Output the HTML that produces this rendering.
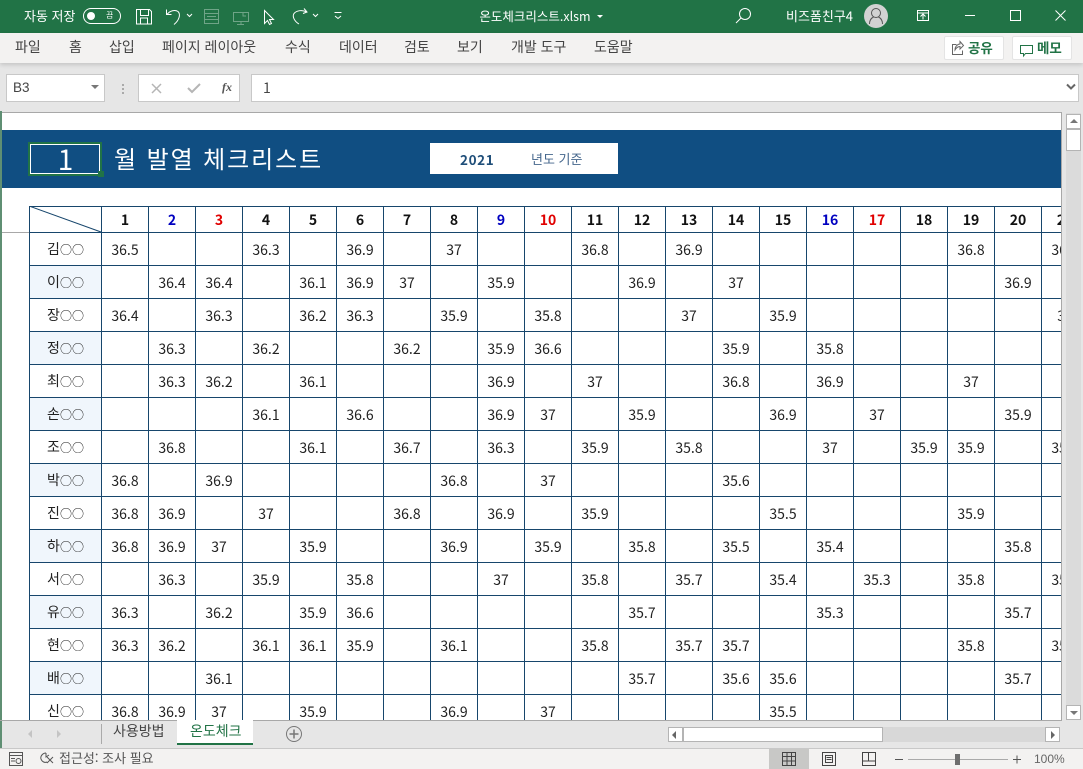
<!DOCTYPE html>
<html lang="ko"><head><meta charset="utf-8"><title>온도체크리스트</title>
<style>
*{box-sizing:border-box}
html,body{margin:0;padding:0}
body{width:1083px;height:769px;position:relative;overflow:hidden;background:#e6e6e6;font-family:"Liberation Sans","Noto Sans CJK KR",sans-serif;color:#333}
.a{position:absolute;white-space:nowrap}
.k{font-family:"Noto Sans CJK KR",sans-serif}
#tb{left:0;top:0;width:1083px;height:33px;background:#217346}
#rb{left:0;top:33px;width:1083px;height:30px;background:#f3f2f1;box-shadow:0 2px 4px rgba(0,0,0,.14)}
.w{color:#fff;font-size:13px;line-height:16px}
.m{font-size:14px;line-height:16px;top:39px;color:#444}
.box{background:#fff;border:1px solid #c8c8c8}
#sheet{left:2px;top:112px;width:1060px;height:609px;background:#fff;border-top:1px solid #a8a8a8;border-right:1px solid #a8a8a8;overflow:hidden}
#sheet table{position:absolute;left:27px;top:93px;border-collapse:collapse;table-layout:fixed;width:1059px;font-family:"Noto Sans CJK KR",sans-serif;font-size:14px;color:#222}
#sheet tr{height:33px}
#sheet tr.h{height:26px}
#sheet td,#sheet th{border:1px solid #17466c;padding:1px 0 0;text-align:center;font-weight:400;line-height:20px;overflow:hidden;white-space:nowrap}
#sheet th i{font-style:normal;font-size:12px}
#sheet tr.h td{font-weight:700;color:#111}
#sheet td.b{color:#0000c0!important}
#sheet td.r{color:#e00000!important}
#sheet th.f{background:#f0f6fc}
.sb{background:#fff;border:1px solid #b4b4b4}
</style></head><body>
<div class="a" id="tb"></div>
<div class="a w k" style="left:24px;top:8px">자동 저장</div>
<div class="a" style="left:83px;top:8px;width:38px;height:16px;border:1px solid #fff;border-radius:8px"></div>
<div class="a" style="left:87px;top:12px;width:8px;height:8px;background:#fff;border-radius:50%"></div>
<div class="a k" style="left:106px;top:10px;color:#fff;font-size:8px;line-height:12px">끔</div>
<svg class="a" style="left:0;top:0" width="1083" height="33" fill="none" stroke="#fff" stroke-width="1">
<path d="M136.500 9.500h13l2 2v12.500h-15zM140.500 9.500v6h8v-6M140.500 24v-6h7v6"/>
<path d="M166.500 9.500v5h5M167 14.500c3-4 8-5 11-3 3 3 1 9-4 13"/>
<path d="M187 14l2.500 2.500L192 14"/>
<g opacity=".35"><path d="M204.500 9.500h14v14h-14zM204.500 13.500h14M204.500 19.500h14M207 16.500h9"/>
<path d="M233.500 12.500h15v9h-15zM241 21.500v3M237 24.500h7M243 12v4h3"/></g>
<path d="M264.500 10.500v13l3-3 2 4 2-1-2-4h4z"/>
<path d="M304 8.500l3 3.500-4 1.500M306.500 12c-4-2.500-10-1.500-12.500 1.500-2 3 .5 8 5 10.500"/>
<path d="M313 14l2.500 2.500L318 14"/>
<path d="M334.500 12.500h7M335 16l3 2.500 3-2.500"/>
<circle cx="745" cy="14" r="5.500"/><path d="M741 18l-5 5"/>
<path d="M917.500 10.500h11v10h-11zM917.500 13h11M923 19.500v-5M920.500 16.500l2.500-2.500 2.500 2.500"/>
<path d="M965 15.500h10M1010.500 10.500h10v10h-10zM1055.500 10.500l10 10M1065.500 10.500l-10 10"/>
</svg>
<div class="a w k" style="left:460px;top:8px;width:150px;text-align:center;font-size:12.500px">온도체크리스트.xlsm</div>
<div class="a" style="left:597px;top:15px;border-left:3px solid transparent;border-right:3px solid transparent;border-top:3px solid #fff"></div>
<div class="a w k" style="left:786px;top:8px">비즈폼친구4</div>
<div class="a" style="left:864px;top:4px;width:24px;height:24px;background:#d2d2d2;border-radius:50%"></div>
<svg class="a" style="left:864px;top:4px" width="24" height="24" fill="none" stroke="#555"><circle cx="12" cy="9" r="4.500"/><path d="M5.500 20c0-5 3-6.500 4-7M18.500 20c0-5-3-6.500-4-7"/></svg>
<div class="a" id="rb"></div>
<div class="a m k" style="left:15px">파일</div>
<div class="a m k" style="left:69px">홈</div>
<div class="a m k" style="left:109px">삽입</div>
<div class="a m k" style="left:162px">페이지 레이아웃</div>
<div class="a m k" style="left:285px">수식</div>
<div class="a m k" style="left:339px">데이터</div>
<div class="a m k" style="left:404px">검토</div>
<div class="a m k" style="left:457px">보기</div>
<div class="a m k" style="left:511px">개발 도구</div>
<div class="a m k" style="left:594px">도움말</div>
<div class="a" style="left:944px;top:36px;width:60px;height:24px;background:#fff;border:1px solid #e4e4e4;border-radius:2px"></div>
<div class="a" style="left:1012px;top:36px;width:60px;height:24px;background:#fff;border:1px solid #e4e4e4;border-radius:2px"></div>
<div class="a k" style="left:968px;top:39px;font-size:13.500px;line-height:16px;font-weight:700;color:#217346">공유</div>
<div class="a k" style="left:1037px;top:39px;font-size:13.500px;line-height:16px;font-weight:700;color:#217346">메모</div>
<svg class="a" style="left:0;top:33px" width="1083" height="30" fill="none" stroke="#217346"><path d="M956.500 11.500h-4v10h10v-4M955 17c0-4 3-6 5-6V8.500l3.500 4-3.500 3.500v-2.500c-2 0-3.500 1-5 3.500z" stroke="#666"/><path d="M1020.500 12.500h12v8h-7l-2 2.500v-2.500h-3z"/></svg>
<div class="a box" style="left:6px;top:74px;width:99px;height:28px"></div>
<div class="a" style="left:13px;top:80px;font-size:13.500px;line-height:16px;color:#444">B3</div>
<div class="a" style="left:91px;top:85px;border-left:4px solid transparent;border-right:4px solid transparent;border-top:4px solid #777"></div>
<svg class="a" style="left:120px;top:83px" width="5" height="13" fill="#aaa"><rect x="2" y="1" width="2" height="2"/><rect x="2" y="5" width="2" height="2"/><rect x="2" y="9" width="2" height="2"/></svg>
<div class="a box" style="left:138px;top:74px;width:102px;height:28px"></div>
<svg class="a" style="left:138px;top:74px" width="102" height="28" fill="none" stroke="#b5b5b5" stroke-width="1.500"><path d="M14 10l9 9M23 10l-9 9"/><path d="M50 14l4 4 8-8" stroke-width="2"/></svg>
<div class="a" style="left:222px;top:80px;font-family:'Liberation Serif',serif;font-style:italic;font-weight:700;font-size:12px;line-height:15px;color:#555">fx</div>
<div class="a box" style="left:251px;top:74px;width:828px;height:28px"></div>
<div class="a k" style="left:263px;top:79px;font-size:14px;line-height:18px;color:#444">1</div>
<svg class="a" style="left:1065px;top:83px" width="12" height="8" fill="none" stroke="#666" stroke-width="2"><path d="M2 1.500l4 4 4-4"/></svg>
<div class="a" style="left:0;top:111px;width:2px;height:637px;background:#5f8f73"></div>

<div class="a" id="sheet">
<div class="a" style="left:0;top:17px;width:1060px;height:58px;background:#104e82"></div>
<div class="a" style="left:0;top:119px;width:27px;height:1px;background:#a8a8a8"></div>
<div class="a" style="left:26px;top:29px;width:74px;height:34px;border:2px solid #217346;box-shadow:inset 0 0 0 1px #fff"></div>
<div class="a" style="left:96px;top:58px;width:6px;height:6px;background:#217346"></div>
<div class="a k" style="left:27px;top:29px;width:73px;text-align:center;color:#fff;font-size:28px;line-height:34px">1</div>
<div class="a k" style="left:112px;top:28px;color:#fff;font-size:24px;line-height:34px;letter-spacing:1.900px">월 발열 체크리스트</div>
<div class="a" style="left:428px;top:30px;width:188px;height:31px;background:#fff"></div>
<div class="a k" style="left:458px;top:36px;color:#1f4e79;font-weight:700;font-size:13.500px;line-height:20px;letter-spacing:.6px">2021</div>
<div class="a k" style="left:529px;top:36px;color:#44668c;font-size:13px;line-height:20px">년도 기준</div>
<table><colgroup><col style="width:72px"><col style="width:47px"><col style="width:47px"><col style="width:47px"><col style="width:47px"><col style="width:47px"><col style="width:47px"><col style="width:47px"><col style="width:47px"><col style="width:47px"><col style="width:47px"><col style="width:47px"><col style="width:47px"><col style="width:47px"><col style="width:47px"><col style="width:47px"><col style="width:47px"><col style="width:47px"><col style="width:47px"><col style="width:47px"><col style="width:47px"><col style="width:47px"></colgroup>
<tr class="h"><td></td><td>1</td><td class="b">2</td><td class="r">3</td><td>4</td><td>5</td><td>6</td><td>7</td><td>8</td><td class="b">9</td><td class="r">10</td><td>11</td><td>12</td><td>13</td><td>14</td><td>15</td><td class="b">16</td><td class="r">17</td><td>18</td><td>19</td><td>20</td><td>21</td></tr>
<tr><th>김<i>○○</i></th><td>36.5</td><td></td><td></td><td>36.3</td><td></td><td>36.9</td><td></td><td>37</td><td></td><td></td><td>36.8</td><td></td><td>36.9</td><td></td><td></td><td></td><td></td><td></td><td>36.8</td><td></td><td>36.9</td></tr>
<tr><th class="f">이<i>○○</i></th><td></td><td>36.4</td><td>36.4</td><td></td><td>36.1</td><td>36.9</td><td>37</td><td></td><td>35.9</td><td></td><td></td><td>36.9</td><td></td><td>37</td><td></td><td></td><td></td><td></td><td></td><td>36.9</td><td></td></tr>
<tr><th>장<i>○○</i></th><td>36.4</td><td></td><td>36.3</td><td></td><td>36.2</td><td>36.3</td><td></td><td>35.9</td><td></td><td>35.8</td><td></td><td></td><td>37</td><td></td><td>35.9</td><td></td><td></td><td></td><td></td><td></td><td>37</td></tr>
<tr><th class="f">정<i>○○</i></th><td></td><td>36.3</td><td></td><td>36.2</td><td></td><td></td><td>36.2</td><td></td><td>35.9</td><td>36.6</td><td></td><td></td><td></td><td>35.9</td><td></td><td>35.8</td><td></td><td></td><td></td><td></td><td></td></tr>
<tr><th>최<i>○○</i></th><td></td><td>36.3</td><td>36.2</td><td></td><td>36.1</td><td></td><td></td><td></td><td>36.9</td><td></td><td>37</td><td></td><td></td><td>36.8</td><td></td><td>36.9</td><td></td><td></td><td>37</td><td></td><td></td></tr>
<tr><th class="f">손<i>○○</i></th><td></td><td></td><td></td><td>36.1</td><td></td><td>36.6</td><td></td><td></td><td>36.9</td><td>37</td><td></td><td>35.9</td><td></td><td></td><td>36.9</td><td></td><td>37</td><td></td><td></td><td>35.9</td><td></td></tr>
<tr><th>조<i>○○</i></th><td></td><td>36.8</td><td></td><td></td><td>36.1</td><td></td><td>36.7</td><td></td><td>36.3</td><td></td><td>35.9</td><td></td><td>35.8</td><td></td><td></td><td>37</td><td></td><td>35.9</td><td>35.9</td><td></td><td>35.8</td></tr>
<tr><th class="f">박<i>○○</i></th><td>36.8</td><td></td><td>36.9</td><td></td><td></td><td></td><td></td><td>36.8</td><td></td><td>37</td><td></td><td></td><td></td><td>35.6</td><td></td><td></td><td></td><td></td><td></td><td></td><td></td></tr>
<tr><th>진<i>○○</i></th><td>36.8</td><td>36.9</td><td></td><td>37</td><td></td><td></td><td>36.8</td><td></td><td>36.9</td><td></td><td>35.9</td><td></td><td></td><td></td><td>35.5</td><td></td><td></td><td></td><td>35.9</td><td></td><td></td></tr>
<tr><th class="f">하<i>○○</i></th><td>36.8</td><td>36.9</td><td>37</td><td></td><td>35.9</td><td></td><td></td><td>36.9</td><td></td><td>35.9</td><td></td><td>35.8</td><td></td><td>35.5</td><td></td><td>35.4</td><td></td><td></td><td></td><td>35.8</td><td></td></tr>
<tr><th>서<i>○○</i></th><td></td><td>36.3</td><td></td><td>35.9</td><td></td><td>35.8</td><td></td><td></td><td>37</td><td></td><td>35.8</td><td></td><td>35.7</td><td></td><td>35.4</td><td></td><td>35.3</td><td></td><td>35.8</td><td></td><td>35.7</td></tr>
<tr><th class="f">유<i>○○</i></th><td>36.3</td><td></td><td>36.2</td><td></td><td>35.9</td><td>36.6</td><td></td><td></td><td></td><td></td><td></td><td>35.7</td><td></td><td></td><td></td><td>35.3</td><td></td><td></td><td></td><td>35.7</td><td></td></tr>
<tr><th>현<i>○○</i></th><td>36.3</td><td>36.2</td><td></td><td>36.1</td><td>36.1</td><td>35.9</td><td></td><td>36.1</td><td></td><td></td><td>35.8</td><td></td><td>35.7</td><td>35.7</td><td></td><td></td><td></td><td></td><td>35.8</td><td></td><td>35.7</td></tr>
<tr><th class="f">배<i>○○</i></th><td></td><td></td><td>36.1</td><td></td><td></td><td></td><td></td><td></td><td></td><td></td><td></td><td>35.7</td><td></td><td>35.6</td><td>35.6</td><td></td><td></td><td></td><td></td><td>35.7</td><td></td></tr>
<tr><th>신<i>○○</i></th><td>36.8</td><td>36.9</td><td>37</td><td></td><td>35.9</td><td></td><td></td><td>36.9</td><td></td><td>37</td><td></td><td></td><td></td><td></td><td>35.5</td><td></td><td></td><td></td><td></td><td></td><td></td></tr>
</table>
<svg class="a" style="left:27px;top:93px" width="73" height="27" fill="none" stroke="#17466c"><path d="M0 0L72 26"/></svg>
</div>

<div class="a" style="left:0;top:720px;width:1062px;height:1px;background:#a8a8a8"></div>
<div class="a" style="left:1062px;top:112px;width:21px;height:609px;background:#e6e6e6"></div>
<div class="a" style="left:1066px;top:113px;width:15px;height:607px;background:#dbdbdb"></div>
<div class="a sb" style="left:1066px;top:114px;width:15px;height:15px"></div>
<div class="a" style="left:1070px;top:119px;border-left:4px solid transparent;border-right:4px solid transparent;border-bottom:4px solid #777"></div>
<div class="a sb" style="left:1066px;top:129px;width:15px;height:22px"></div>
<div class="a sb" style="left:1066px;top:705px;width:15px;height:15px"></div>
<div class="a" style="left:1070px;top:711px;border-left:4px solid transparent;border-right:4px solid transparent;border-top:4px solid #777"></div>
<div class="a" style="left:2px;top:721px;width:1081px;height:27px;background:#e6e6e6"></div>
<div class="a" style="left:101px;top:724px;width:1px;height:20px;background:#aaa"></div>
<div class="a" style="left:28px;top:730px;border-top:4px solid transparent;border-bottom:4px solid transparent;border-right:4px solid #c4c4c4"></div>
<div class="a" style="left:57px;top:730px;border-top:4px solid transparent;border-bottom:4px solid transparent;border-left:4px solid #c4c4c4"></div>
<div class="a k" style="left:113px;top:722px;font-size:14px;line-height:18px;color:#444">사용방법</div>
<div class="a" style="left:177px;top:720px;width:76px;height:25px;background:#fff;border-bottom:2px solid #217346"></div>
<div class="a k" style="left:190px;top:722px;font-size:14px;line-height:18px;color:#217346">온도체크</div>
<svg class="a" style="left:286px;top:726px" width="16" height="16" fill="none" stroke="#777"><circle cx="8" cy="8" r="7.500"/><path d="M8 3.500v9M3.500 8h9" stroke-width="1.500"/></svg>
<div class="a" style="left:668px;top:727px;width:392px;height:15px;background:#d8d8d8"></div>
<div class="a sb" style="left:668px;top:727px;width:15px;height:15px"></div>
<div class="a" style="left:672px;top:731px;border-top:4px solid transparent;border-bottom:4px solid transparent;border-right:4px solid #666"></div>
<div class="a sb" style="left:683px;top:727px;width:200px;height:15px"></div>
<div class="a sb" style="left:1045px;top:727px;width:15px;height:15px"></div>
<div class="a" style="left:1051px;top:731px;border-top:4px solid transparent;border-bottom:4px solid transparent;border-left:4px solid #666"></div>
<div class="a" style="left:0;top:748px;width:1083px;height:21px;background:#f3f2f1;border-top:1px solid #c8c8c8"></div>
<svg class="a" style="left:0;top:748px" width="1083" height="21" fill="none" stroke="#555">
<path d="M9.500 4.500h13v13h-13zM9.500 7.500h13M11 10.500h4M11 13h4"/><circle cx="18.500" cy="13" r="2.500"/>
<path d="M46 5c-3 0-6 3-5 6 1 3 4 4 6 3M47 9l6 6M53 9l-6 6M46 5v4l3-2"/>
</svg>
<div class="a k" style="left:59px;top:750px;font-size:13px;line-height:16px;color:#555">접근성: 조사 필요</div>
<div class="a" style="left:769px;top:749px;width:40px;height:20px;background:#c8c8c6"></div>
<svg class="a" style="left:760px;top:748px" width="323" height="21" fill="none" stroke="#444">
<path d="M22.500 4.500h13v13h-13zM22.500 8.500h13M22.500 13h13M27 4.500v13M31.500 4.500v13"/>
<path d="M62.500 4.500h13v13h-13zM65.500 7.500h7v7h-7zM66.500 9.500h5M66.500 11.500h5"/>
<path d="M102.500 4.500h13v13h-13zM102.500 13h13M108.500 4.500v8.500"/>
<path d="M135 11.500h8" stroke="#555"/>
<path d="M148 11.500h100" stroke="#aaa"/>
<path d="M253 11.500h8M257 7.500v8" stroke="#555"/>
</svg>
<div class="a" style="left:955px;top:754px;width:5px;height:11px;background:#6e6e6e"></div>
<div class="a" style="left:1034px;top:751px;font-size:12px;line-height:16px;color:#666">100%</div>
</body></html>
